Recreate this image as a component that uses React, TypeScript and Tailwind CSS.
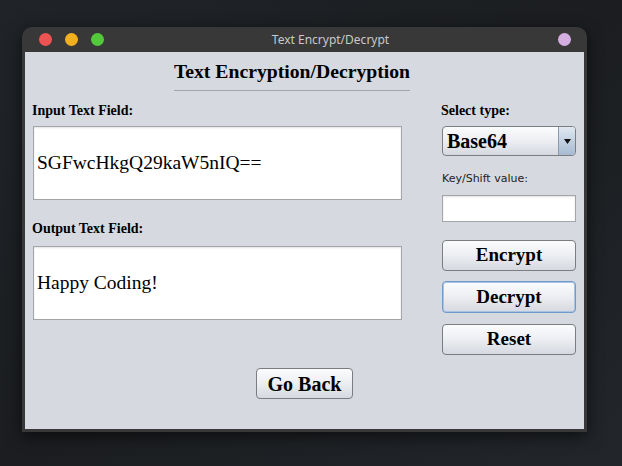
import React from "react";

const serif = "font-['Liberation_Serif','Times_New_Roman',serif]";

function SwingButton({ label, focused = false, className = "" }: { label: string; focused?: boolean; className?: string }) {
  return (
    <button
      type="button"
      className={`flex items-center justify-center rounded-[4px] border bg-gradient-to-b from-[#fbfcfd] via-[#eceef2] to-[#d5d8df] font-bold text-black ${serif} ${
        focused ? "border-[#6f9bcb] shadow-[inset_0_0_0_1px_#a9c4e2]" : "border-[#7b7d80]"
      } ${className}`}
    >
      {label}
    </button>
  );
}

function TextBox({ value }: { value: string }) {
  return (
    <div className={`flex h-[74px] items-center border border-[#a3a5a8] bg-white px-[3px] text-[19.5px] text-black shadow-[inset_0_1px_2px_rgba(0,0,0,0.12)] ${serif}`}>
      {value}
    </div>
  );
}

export default function App() {
  return (
    <div className="h-[466px] w-[622px] overflow-hidden bg-gradient-to-br from-[#202428] via-[#1b1d20] to-[#22262a] pl-[22px] pt-[27px]">
      <div className="flex h-[405px] w-[565px] flex-col overflow-hidden rounded-t-[10px] bg-[#383838] shadow-[0_4px_16px_rgba(0,0,0,0.6)]">
        {/* Title bar */}
        <div className="relative flex h-[25px] shrink-0 items-center px-[17px]">
          <div className="flex gap-[13px]">
            <span className="h-[13px] w-[13px] rounded-full bg-[#ec5453]" />
            <span className="h-[13px] w-[13px] rounded-full bg-[#f2b01e]" />
            <span className="h-[13px] w-[13px] rounded-full bg-[#53c83a]" />
          </div>
          <span className="absolute left-0 right-0 pl-[52px] text-center font-['Noto_Sans',sans-serif] text-[12px] text-[#c9c9c9]">
            Text Encrypt/Decrypt
          </span>
          <span className="ml-auto mr-[-1px] h-[13px] w-[13px] rounded-full bg-[#d4aede]" />
        </div>

        {/* Content */}
        <div className="mx-[3px] mb-[3px] flex flex-1 flex-col bg-[#d6d9e0]">
          <div className="ml-[149px] mt-[8px] w-[236px] border-b border-[#a3a6ab] pb-[8px]">
            <h1 className={`-mx-[20px] whitespace-nowrap text-center text-[19.7px] font-bold leading-[22px] text-black ${serif}`}>
              Text Encryption/Decryption
            </h1>
          </div>

          <div className="mt-[12px] flex gap-[40px] px-[8px]">
            {/* Left column */}
            <div className="flex w-[369px] flex-col">
              <label className={`-ml-[1px] text-[14px] font-bold leading-[16px] text-black ${serif}`}>Input Text Field:</label>
              <div className="mt-[7px]">
                <TextBox value="SGFwcHkgQ29kaW5nIQ==" />
              </div>
              <label className={`-ml-[1px] mt-[21px] text-[14px] font-bold leading-[16px] text-black ${serif}`}>Output Text Field:</label>
              <div className="mt-[9px]">
                <TextBox value="Happy Coding!" />
              </div>
            </div>

            {/* Right column */}
            <div className="flex w-[134px] flex-col">
              <label className={`-ml-[1px] text-[14px] font-bold leading-[16px] text-black ${serif}`}>Select type:</label>
              <div className="mt-[7px] flex h-[30px] overflow-hidden rounded-[4px] border border-[#7b7d80] bg-gradient-to-b from-[#fbfcfd] via-[#eceef2] to-[#d5d8df]">
                <span className={`flex flex-1 items-center pl-[4px] text-[20px] font-bold text-black ${serif}`}>Base64</span>
                <span className="flex w-[17px] items-center justify-center border-l border-[#8a9bb0] bg-gradient-to-b from-[#dfe8f2] to-[#a6bad0]">
                  <svg width="7" height="5" viewBox="0 0 7 5">
                    <path d="M0 0 H7 L3.5 5 Z" fill="#111" />
                  </svg>
                </span>
              </div>
              <label className="mt-[15px] font-['DejaVu_Sans',sans-serif] text-[11px] leading-[16px] text-[#222]">Key/Shift value:</label>
              <div className="mt-[8px] h-[27px] border border-[#a3a5a8] bg-white shadow-[inset_0_1px_2px_rgba(0,0,0,0.12)]" />
              <SwingButton label="Encrypt" className="mt-[18px] h-[31px] text-[19px]" />
              <SwingButton label="Decrypt" focused className="mt-[10px] h-[32px] text-[19px]" />
              <SwingButton label="Reset" className="mt-[11px] h-[31px] text-[19px]" />
            </div>
          </div>

          <div className="mt-[13px] flex justify-center">
            <SwingButton label="Go Back" className="h-[31px] w-[97px] text-[20px]" />
          </div>
        </div>
      </div>
    </div>
  );
}
